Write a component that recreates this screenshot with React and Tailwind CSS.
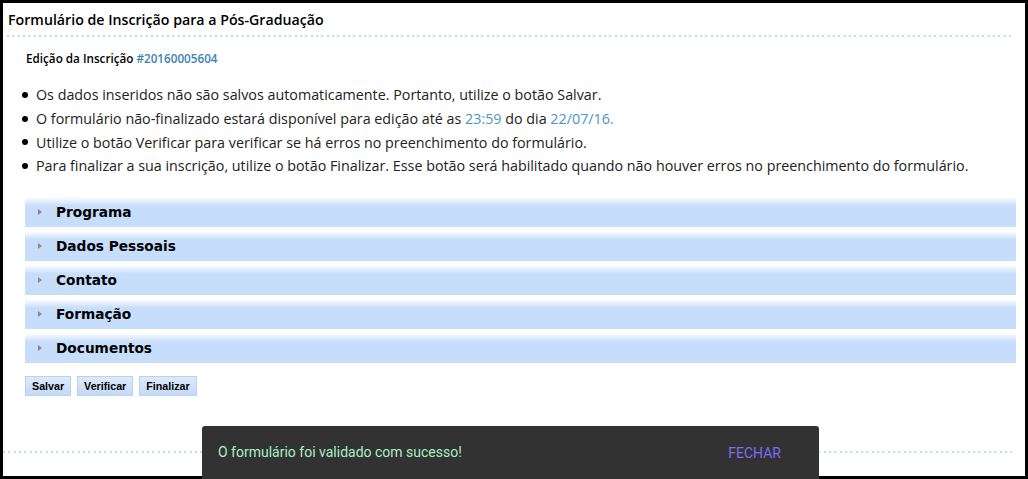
import React from "react";

const sections = ["Programa", "Dados Pessoais", "Contato", "Formação", "Documentos"];

function Dots({ className }) {
  return (
    <div
      className={
        "h-[2px] bg-[repeating-linear-gradient(90deg,#c3d9f7_0px,#c3d9f7_2px,transparent_2px,transparent_5.33px)] " +
        className
      }
    />
  );
}

export default function App() {
  return (
    <div className="w-[1028px] h-[479px] bg-black p-[3px] overflow-hidden">
      <div className="relative w-full h-full bg-white flex flex-col font-['Open_Sans',sans-serif] text-[#222]">
        <div className="h-[32px] flex items-center pl-[5px] pt-[2px]">
          <h1 className="text-[14.2px] font-semibold text-black">Formulário de Inscrição para a Pós-Graduação</h1>
        </div>
        <Dots className="ml-[4px] mr-[12px]" />

        <div className="mt-[13px] ml-[23px] text-[11.7px] leading-[16px] font-semibold text-black">
          Edição da Inscrição <span className="text-[#3a82b6]">#20160005604</span>
        </div>

        <ul className="mt-[17px] ml-[19px] text-[14.3px] leading-[23.8px] text-[#222]">
          <li className="flex items-center">
            <span className="w-[6px] h-[6px] rounded-full bg-black mr-[8px]" />
            Os dados inseridos não são salvos automaticamente. Portanto, utilize o botão Salvar.
          </li>
          <li className="flex items-center">
            <span className="w-[6px] h-[6px] rounded-full bg-black mr-[8px]" />
            <span>
              O formulário não-finalizado estará disponível para edição até as{" "}
              <span className="text-[#4b94c6]">23:59</span> do dia{" "}
              <span className="text-[#4b94c6]">22/07/16.</span>
            </span>
          </li>
          <li className="flex items-center">
            <span className="w-[6px] h-[6px] rounded-full bg-black mr-[8px]" />
            Utilize o botão Verificar para verificar se há erros no preenchimento do formulário.
          </li>
          <li className="flex items-center">
            <span className="w-[6px] h-[6px] rounded-full bg-black mr-[8px]" />
            Para finalizar a sua inscrição, utilize o botão Finalizar. Esse botão será habilitado quando não houver erros no preenchimento do formulário.
          </li>
        </ul>

        <div className="mt-[19px] ml-[22px] mr-[9px] flex flex-col gap-[4px]">
          {sections.map((s) => (
            <div
              key={s}
              className="h-[30px] flex items-center bg-[linear-gradient(to_bottom,#ffffff_0px,#c6ddfb_9px,#c6ddfb_100%)]"
            >
              <span className="ml-[13px] w-0 h-0 border-y-[3.5px] border-y-transparent border-l-[4px] border-l-[#8a8a8a]" />
              <span className="ml-[14px] font-['DejaVu_Sans',sans-serif] font-bold text-[13.7px] text-black">{s}</span>
            </div>
          ))}
        </div>

        <div className="mt-[13px] ml-[22px] flex gap-[6px]">
          {["Salvar", "Verificar", "Finalizar"].map((b) => (
            <button
              key={b}
              className="h-[20px] px-[6px] border border-[#b9d2f2] bg-[linear-gradient(to_bottom,#dfeafb,#c3d9f7)] font-['Liberation_Sans',sans-serif] font-bold text-[10.7px] text-black"
            >
              {b}
            </button>
          ))}
        </div>

        <Dots className="mt-[55px] mr-[12px]" />

        <div className="absolute left-[199px] top-[423px] w-[617px] h-[60px] bg-[#323232] rounded-t-[3px] flex items-start pt-[16px] pl-[16px] font-['Roboto',sans-serif] text-[14px]">
          <span className="text-[#a9f0c4]">O formulário foi validado com sucesso!</span>
          <span className="ml-auto mr-[38px] mt-[1px] text-[#7b6df5]">FECHAR</span>
        </div>
      </div>
    </div>
  );
}
